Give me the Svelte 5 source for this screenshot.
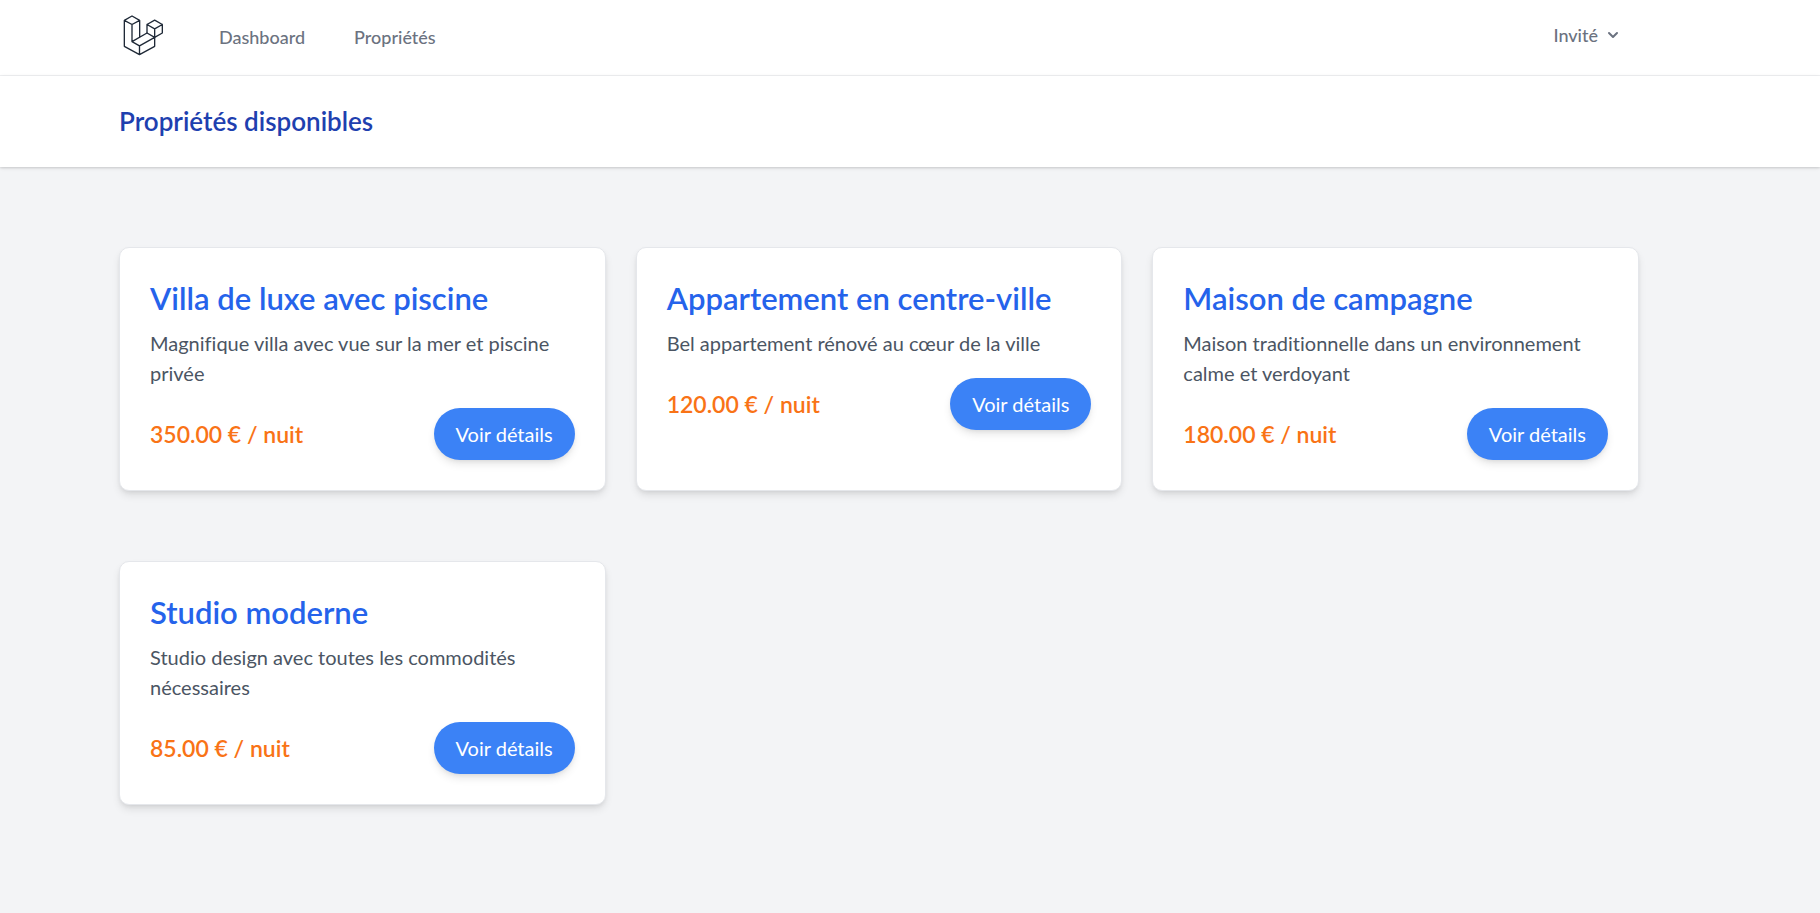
<script>
  const properties = [
    { title: 'Villa de luxe avec piscine', description: 'Magnifique villa avec vue sur la mer et piscine privée', price: '350.00' },
    { title: 'Appartement en centre-ville', description: 'Bel appartement rénové au cœur de la ville', price: '120.00' },
    { title: 'Maison de campagne', description: 'Maison traditionnelle dans un environnement calme et verdoyant', price: '180.00' },
    { title: 'Studio moderne', description: 'Studio design avec toutes les commodités nécessaires', price: '85.00' }
  ];
</script>

<div class="page">
  <nav class="navbar">
    <div class="container bar">
      <a class="logo" href="/" aria-label="Accueil">
        <svg viewBox="57 39 135 135" width="45" height="45" fill="none" stroke="#1f2937" stroke-width="4" stroke-linejoin="round" stroke-linecap="round">
          <path d="M96 48 73 61 96 73.500 119 61ZM73 61V139L118.500 164 164 139V112M96 73.500V125L118.500 137.500V164M119 61V112M96 125 141 99 164 112 118.500 137.500" />
          <path d="M164 60.500 141 73.500 164 86.500 187 73.500ZM141 73.500V99M187 73.500V99L164 112V86.500" />
        </svg>
      </a>
      <div class="links">
        <a href="/dashboard">Dashboard</a>
        <a href="/proprietes">Propriétés</a>
      </div>
      <button class="account" type="button">
        Invité
        <svg viewBox="0 0 20 20" width="20" height="20" fill="currentColor" aria-hidden="true">
          <path fill-rule="evenodd" clip-rule="evenodd" d="M5.293 7.293a1 1 0 0 1 1.414 0L10 10.586l3.293-3.293a1 1 0 1 1 1.414 1.414l-4 4a1 1 0 0 1-1.414 0l-4-4a1 1 0 0 1 0-1.414z" />
        </svg>
      </button>
    </div>
  </nav>

  <header class="heading">
    <div class="container">
      <h1>Propriétés disponibles</h1>
    </div>
  </header>

  <main>
    <div class="container grid">
      {#each properties as property}
        <article class="card">
          <h2>{property.title}</h2>
          <p>{property.description}</p>
          <div class="footer">
            <span class="price">{property.price} € / nuit</span>
            <button class="details" type="button">Voir détails</button>
          </div>
        </article>
      {/each}
    </div>
  </main>
</div>

<style>
  :global(body) {
    margin: 0;
    background: #f3f4f6;
  }

  .page {
    min-height: 100vh;
    background: #f3f4f6;
    color: #111827;
    font-family: Lato, "Open Sans", sans-serif;
    font-size: 20px;
    font-variant-ligatures: none;
    line-height: 30px;
  }

  .navbar,
  .heading,
  main {
    padding-right: 62px;
  }

  .navbar,
  .heading {
    background: #fff;
  }

  .container {
    box-sizing: border-box;
    max-width: 1600px;
    margin: 0 auto;
    padding: 0 40px;
  }

  .navbar {
    border-bottom: 1px solid #f0f1f3;
  }

  .bar {
    display: flex;
    align-items: center;
    height: 75px;
    padding-bottom: 5px;
  }

  .logo {
    display: flex;
  }

  .links {
    display: flex;
    flex: 1;
    gap: 49px;
    margin-left: 55px;
    padding-top: 4px;
  }

  .links a,
  .account {
    color: #6b7280;
    font-size: 18px;
    font-weight: 500;
    line-height: 25px;
    text-decoration: none;
  }

  .account {
    display: flex;
    align-items: center;
    gap: 5px;
    padding: 10px 16px;
    border: 0;
    background: #fff;
    font-family: inherit;
    cursor: pointer;
  }

  .heading {
    position: relative;
    padding-top: 30px;
    padding-bottom: 30px;
    box-shadow: 0 1px 4px rgb(0 0 0 / 0.1), 0 1px 2px rgb(0 0 0 / 0.1);
  }

  h1,
  h2,
  p {
    margin: 0;
  }

  h1 {
    color: #1e40af;
    font-size: 26px;
    font-weight: 600;
    line-height: 31px;
  }

  main {
    padding-top: 80px;
    padding-bottom: 80px;
  }

  .grid {
    display: grid;
    grid-template-columns: repeat(3, minmax(0, 1fr));
    gap: 70px 30px;
  }

  .card {
    box-sizing: border-box;
    padding: 30px;
    border: 1px solid #e5e7eb;
    border-radius: 10px;
    background: #fff;
    box-shadow: 0 5px 8px -1px rgb(0 0 0 / 0.1), 0 2px 5px -2px rgb(0 0 0 / 0.1);
  }

  h2 {
    margin-bottom: 10px;
    color: #2563eb;
    font-size: 31px;
    font-weight: 600;
    line-height: 40px;
  }

  p {
    color: #4b5563;
  }

  .footer {
    display: flex;
    align-items: center;
    justify-content: space-between;
    margin-top: 20px;
  }

  .price {
    color: #f97316;
    font-size: 23px;
    font-weight: 600;
  }

  .details {
    padding: 11px 22px;
    border: 0;
    border-radius: 26px;
    background: #3b82f6;
    color: #fff;
    font: inherit;
    box-shadow: 0 5px 8px -1px rgb(0 0 0 / 0.1), 0 2px 5px -2px rgb(0 0 0 / 0.1);
    cursor: pointer;
  }
</style>
